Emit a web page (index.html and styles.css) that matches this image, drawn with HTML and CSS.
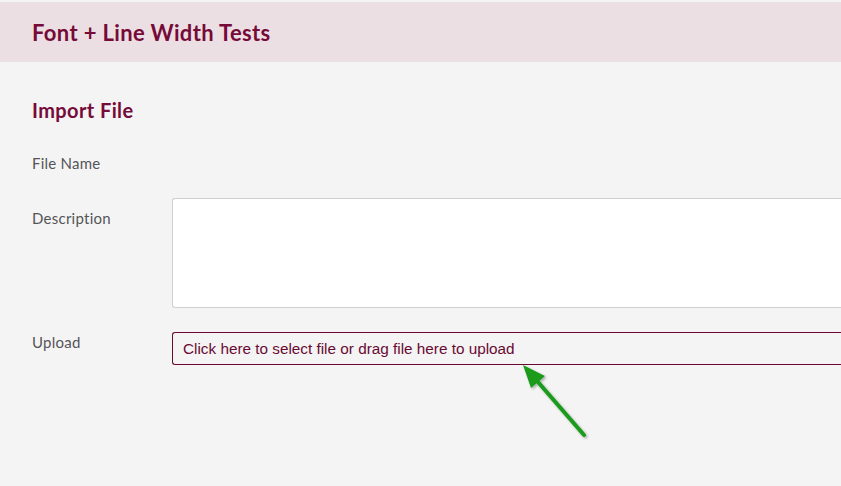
FILE: index.html
```html
<!DOCTYPE html>
<html>
<head>
<meta charset="utf-8">
<link rel="stylesheet" href="styles.css">
</head>
<body>
<div class="page">
  <header class="topbar">
    <h1 class="title">Font + Line Width Tests</h1>
  </header>
  <main class="content">
    <h2 class="section-title">Import File</h2>
    <div class="form">
      <div class="row row-name">
        <label class="label">File Name</label>
        <div class="field"></div>
      </div>
      <div class="row row-desc">
        <label class="label label-desc">Description</label>
        <div class="field"><div class="textarea"></div></div>
      </div>
      <div class="row row-upload">
        <label class="label label-upload">Upload</label>
        <div class="field"><div class="upload">Click here to select file or drag file here to upload</div></div>
      </div>
    </div>
  </main>
  <svg class="arrow" width="90" height="90" viewBox="0 0 90 90">
    <defs>
      <filter id="sh" x="-20%" y="-20%" width="140%" height="140%">
        <feDropShadow dx="1.5" dy="1.5" stdDeviation="1" flood-color="#000" flood-opacity="0.3"/>
      </filter>
    </defs>
    <g filter="url(#sh)">
      <line x1="81" y1="73" x2="35" y2="20" stroke="#1a9a1a" stroke-width="4" stroke-linecap="round"/>
      <polygon points="20,3 42,14 28,26" fill="#1a9a1a"/>
    </g>
  </svg>
</div>
</body>
</html>
```
FILE: styles.css
```css
html, body {
  margin: 0;
  padding: 0;
}
body {
  background: #f4f4f4;
  width: 841px;
  height: 486px;
  overflow: hidden;
  font-family: "Lato", "Open Sans", sans-serif;
}
.page {
  position: relative;
  padding-top: 2px;
  height: 484px;
}
.topbar {
  background: #ebdfe3;
  height: 60px;
  display: flex;
  align-items: center;
  padding-left: 32px;
}
.title {
  margin: 0;
  font-size: 22px;
  font-weight: 700;
  color: #760a38;
  letter-spacing: 0.35px;
}
.content {
  padding: 36px 0 0 32px;
}
.section-title {
  margin: 0 0 32px;
  font-size: 20px;
  font-weight: 700;
  color: #760a38;
  line-height: 24px;
  letter-spacing: 0.4px;
}
.form {
  display: flex;
  flex-direction: column;
}
.row {
  display: grid;
  grid-template-columns: 140px 1fr;
}
.label {
  font-size: 15px;
  color: #555558;
  line-height: 18px;
  letter-spacing: 0.25px;
}
.row-name {
  height: 44px;
}
.label-desc {
  padding-top: 11px;
}
.textarea {
  height: 108px;
  background: #fff;
  border: 1px solid #cfcfcf;
  border-right: 0;
  border-radius: 3px 0 0 3px;
}
.row-upload {
  margin-top: 24px;
}
.label-upload {
  padding-top: 1px;
}
.upload {
  height: 31px;
  border: 1px solid #6a0a33;
  border-right: 0;
  border-radius: 3px 0 0 3px;
  font-family: "Liberation Sans", Arial, sans-serif;
  font-size: 15.3px;
  color: #6a0a33;
  line-height: 31px;
  padding-left: 10px;
}
.arrow {
  position: absolute;
  left: 503px;
  top: 362px;
}
```
